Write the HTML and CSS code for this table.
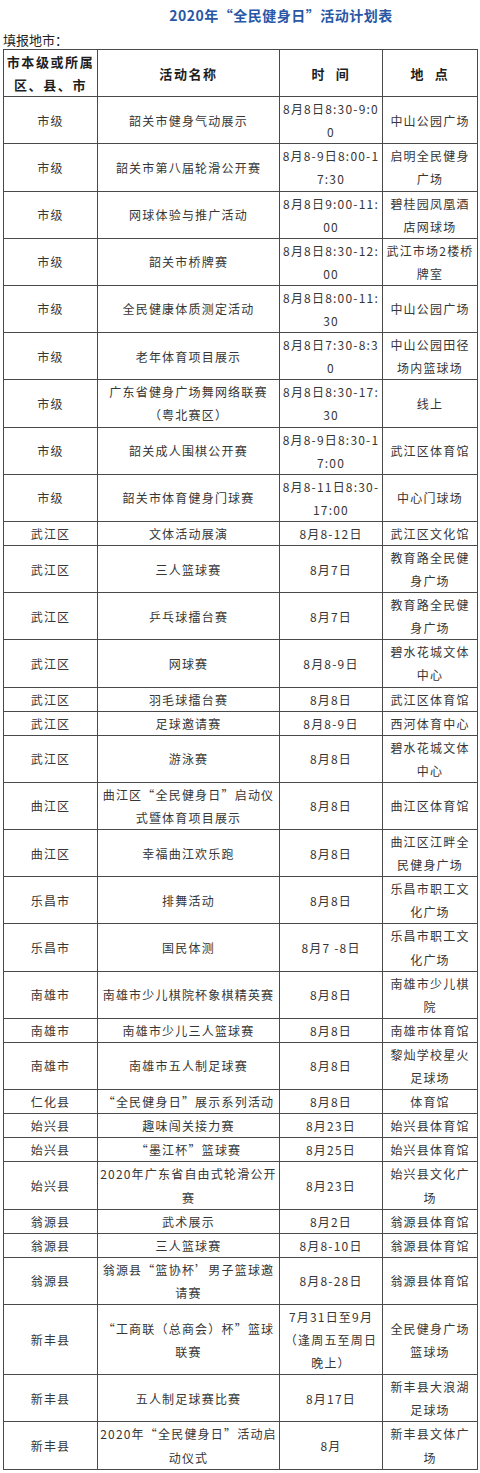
FILE: index.html
```html
<!DOCTYPE html>
<html lang="zh-CN">
<head>
<meta charset="utf-8">
<title>2020年“全民健身日”活动计划表</title>
<link rel="stylesheet" href="styles.css">
</head>
<body>
<div class="page">
  <h1 class="title">2020年“全民健身日”活动计划表</h1>
  <div class="region">填报地市：</div>
  <table class="plan">
    <colgroup>
      <col class="c-area">
      <col class="c-name">
      <col class="c-time">
      <col class="c-place">
    </colgroup>
    <thead>
      <tr>
        <th>市本级或所属<br>区、县、市</th>
        <th>活动名称</th>
        <th><span class="spaced">时 间</span></th>
        <th><span class="spaced">地 点</span></th>
      </tr>
    </thead>
    <tbody>
      <tr><td>市级</td><td>韶关市健身气动展示</td><td>8月8日8:30-9:0<br>0</td><td>中山公园广场</td></tr>
      <tr><td>市级</td><td>韶关市第八届轮滑公开赛</td><td>8月8-9日8:00-1<br>7:30</td><td>启明全民健身<br>广场</td></tr>
      <tr><td>市级</td><td>网球体验与推广活动</td><td>8月8日9:00-11:<br>00</td><td>碧桂园凤凰酒<br>店网球场</td></tr>
      <tr><td>市级</td><td>韶关市桥牌赛</td><td>8月8日8:30-12:<br>00</td><td>武江市场2楼桥<br>牌室</td></tr>
      <tr><td>市级</td><td>全民健康体质测定活动</td><td>8月8日8:00-11:<br>30</td><td>中山公园广场</td></tr>
      <tr><td>市级</td><td>老年体育项目展示</td><td>8月8日7:30-8:3<br>0</td><td>中山公园田径<br>场内篮球场</td></tr>
      <tr><td>市级</td><td>广东省健身广场舞网络联赛<br>（粤北赛区）</td><td>8月8日8:30-17:<br>30</td><td>线上</td></tr>
      <tr><td>市级</td><td>韶关成人围棋公开赛</td><td>8月8-9日8:30-1<br>7:00</td><td>武江区体育馆</td></tr>
      <tr><td>市级</td><td>韶关市体育健身门球赛</td><td>8月8-11日8:30-<br>17:00</td><td>中心门球场</td></tr>
      <tr><td>武江区</td><td>文体活动展演</td><td>8月8-12日</td><td>武江区文化馆</td></tr>
      <tr><td>武江区</td><td>三人篮球赛</td><td>8月7日</td><td>教育路全民健<br>身广场</td></tr>
      <tr><td>武江区</td><td>乒乓球擂台赛</td><td>8月7日</td><td>教育路全民健<br>身广场</td></tr>
      <tr><td>武江区</td><td>网球赛</td><td>8月8-9日</td><td>碧水花城文体<br>中心</td></tr>
      <tr><td>武江区</td><td>羽毛球擂台赛</td><td>8月8日</td><td>武江区体育馆</td></tr>
      <tr><td>武江区</td><td>足球邀请赛</td><td>8月8-9日</td><td>西河体育中心</td></tr>
      <tr><td>武江区</td><td>游泳赛</td><td>8月8日</td><td>碧水花城文体<br>中心</td></tr>
      <tr><td>曲江区</td><td>曲江区“全民健身日”启动仪<br>式暨体育项目展示</td><td>8月8日</td><td>曲江区体育馆</td></tr>
      <tr><td>曲江区</td><td>幸福曲江欢乐跑</td><td>8月8日</td><td>曲江区江畔全<br>民健身广场</td></tr>
      <tr><td>乐昌市</td><td>排舞活动</td><td>8月8日</td><td>乐昌市职工文<br>化广场</td></tr>
      <tr><td>乐昌市</td><td>国民体测</td><td>8月7 -8日</td><td>乐昌市职工文<br>化广场</td></tr>
      <tr><td>南雄市</td><td>南雄市少儿棋院杯象棋精英赛</td><td>8月8日</td><td>南雄市少儿棋<br>院</td></tr>
      <tr><td>南雄市</td><td>南雄市少儿三人篮球赛</td><td>8月8日</td><td>南雄市体育馆</td></tr>
      <tr><td>南雄市</td><td>南雄市五人制足球赛</td><td>8月8日</td><td>黎灿学校星火<br>足球场</td></tr>
      <tr><td>仁化县</td><td>“全民健身日”展示系列活动</td><td>8月8日</td><td>体育馆</td></tr>
      <tr><td>始兴县</td><td>趣味闯关接力赛</td><td>8月23日</td><td>始兴县体育馆</td></tr>
      <tr><td>始兴县</td><td>“墨江杯”篮球赛</td><td>8月25日</td><td>始兴县体育馆</td></tr>
      <tr><td>始兴县</td><td>2020年广东省自由式轮滑公开<br>赛</td><td>8月23日</td><td>始兴县文化广<br>场</td></tr>
      <tr><td>翁源县</td><td>武术展示</td><td>8月2日</td><td>翁源县体育馆</td></tr>
      <tr><td>翁源县</td><td>三人篮球赛</td><td>8月8-10日</td><td>翁源县体育馆</td></tr>
      <tr><td>翁源县</td><td>翁源县“篮协杯’男子篮球邀<br>请赛</td><td>8月8-28日</td><td>翁源县体育馆</td></tr>
      <tr><td>新丰县</td><td>“工商联（总商会）杯”篮球<br>联赛</td><td>7月31日至9月<br>（逢周五至周日<br>晚上）</td><td>全民健身广场<br>篮球场</td></tr>
      <tr><td>新丰县</td><td>五人制足球赛比赛</td><td>8月17日</td><td>新丰县大浪湖<br>足球场</td></tr>
      <tr><td>新丰县</td><td>2020年“全民健身日”活动启<br>动仪式</td><td>8月</td><td>新丰县文体广<br>场</td></tr>
    </tbody>
  </table>
</div>
</body>
</html>
```

FILE: styles.css
```css
html, body {
  margin: 0;
  padding: 0;
  background: #ffffff;
}

body {
  font-family: "Noto Sans CJK SC", "Liberation Sans", sans-serif;
  color: #333333;
}

.page {
  padding: 0 3px;
  width: 474px;
}

.title {
  margin: 0;
  height: 30px;
  line-height: 30px;
  padding-left: 82px;
  text-align: center;
  font-size: 14px;
  font-weight: 700;
  letter-spacing: 0.5px;
  color: #2857a6;
}

.region {
  height: 19px;
  line-height: 19px;
  font-size: 13px;
  color: #222222;
}

.plan {
  width: 474px;
  table-layout: fixed;
  border-collapse: collapse;
  border: 1px solid #3e3e3e;
}

.c-area { width: 94px; }
.c-name { width: 182px; }
.c-time { width: 103px; }
.c-place { width: 95px; }

.plan th,
.plan td {
  border: 1px solid #4a4a4a;
  padding: 0;
  text-align: center;
  vertical-align: middle;
  white-space: nowrap;
  overflow: hidden;
  line-height: 23.1px;
}

.plan th {
  font-size: 13px;
  font-weight: 700;
  letter-spacing: 1.6px;
  color: #1e1e1e;
}

.plan td {
  font-size: 12px;
  letter-spacing: 1.2px;
  color: #363636;
}

.spaced {
  word-spacing: 5px;
}
```
